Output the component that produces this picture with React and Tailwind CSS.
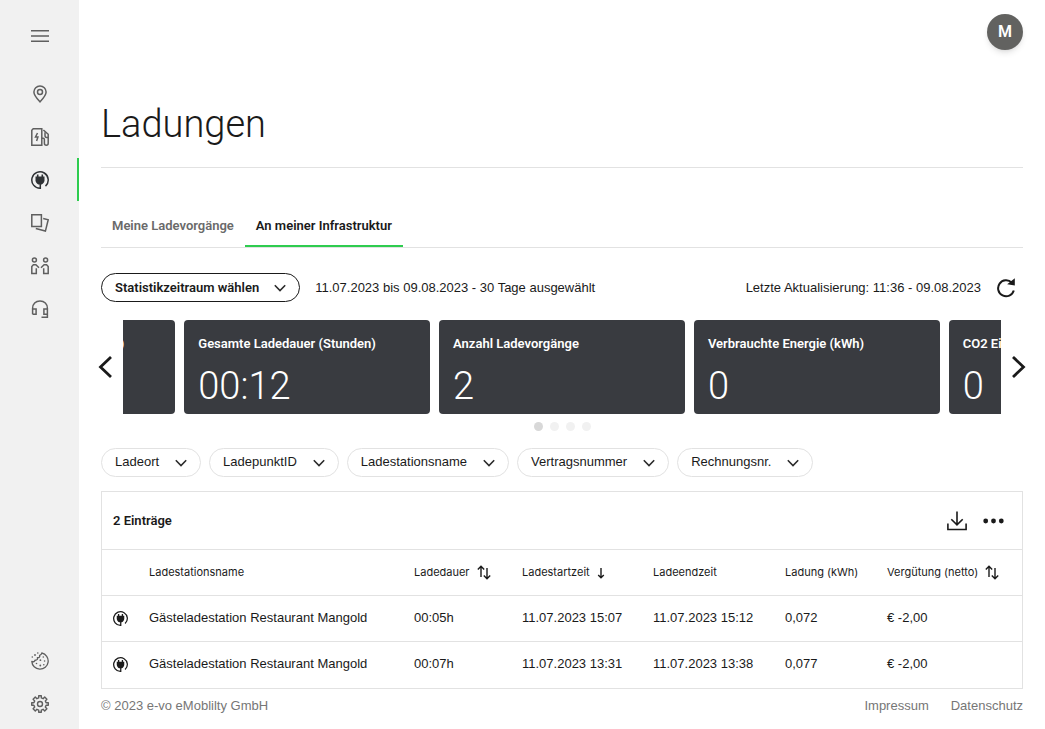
import React, { useState } from 'react';

const navItems = [
    { id: 'map', label: 'Karte', icon: PinIcon },
    { id: 'stations', label: 'Ladestationen', icon: StationIcon },
    { id: 'charges', label: 'Ladungen', icon: PlugIcon },
    { id: 'cards', label: 'Ladekarten', icon: CardsIcon },
    { id: 'users', label: 'Nutzer', icon: UsersIcon },
    { id: 'support', label: 'Support', icon: HeadsetIcon },
];

const stats = [
    { title: 'Gesamte Vergütung (Eur netto)', value: '' },
    { title: 'Gesamte Ladedauer (Stunden)', value: '00:12' },
    { title: 'Anzahl Ladevorgänge', value: '2' },
    { title: 'Verbrauchte Energie (kWh)', value: '0' },
    { title: 'CO2 Einsparung (kg)', value: '0' },
];

const filters = ['Ladeort', 'LadepunktID', 'Ladestationsname', 'Vertragsnummer', 'Rechnungsnr.'];

const rows = [
    { id: 1, name: 'Gästeladestation Restaurant Mangold', duration: '00:05h', start: '11.07.2023 15:07', end: '11.07.2023 15:12', energy: '0,072', fee: '€ -2,00' },
    { id: 2, name: 'Gästeladestation Restaurant Mangold', duration: '00:07h', start: '11.07.2023 13:31', end: '11.07.2023 13:38', energy: '0,077', fee: '€ -2,00' },
];

function PinIcon() {
    return (
        <svg width="18" height="18" viewBox="0 0 18 18" fill="none" stroke="currentColor" strokeWidth="1.5">
            <path d="M9 16.9C6 13.6 2.900 10.400 2.900 7a6.100 6.100 0 0 1 12.200 0c0 3.400-3.100 6.600-6.100 9.900z" strokeLinejoin="round" />
            <circle cx="9" cy="7" r="2.500" />
        </svg>
    );
}

function StationIcon() {
    return (
        <svg width="18" height="18" viewBox="0 0 18 18" fill="none" stroke="currentColor" strokeWidth="1.5">
            <path d="M.8 17.200V2.200L2.200.8h8.600v16.400z" />
            <path d="M6.500 5 4.500 9h2.400l-1.300 4" />
            <path d="M10.800 10.300h1.300c.9 0 1.300.5 1.300 1.300v3.700c0 2.600 3.800 2.600 3.800 0V6.300L12.400 2" />
            <path d="M17.200 9.500h-1.500c-.9 0-1.700-.9-1.700-2V4.200" />
        </svg>
    );
}

function PlugIcon({ size = 18 }) {
    return (
        <svg width={size} height={size} viewBox="0 0 18 18" fill="none" stroke="currentColor">
            <path d="M9.300 12.500v4.700A8.200 8.200 0 1 1 14.500 15.100" strokeWidth="1.500" />
            <path d="M4.500 5.600h9v3.600c0 1.900-1.200 3.400-2.900 4.200H7.400C5.700 12.600 4.500 11.100 4.500 9.200z" fill="currentColor" stroke="none" />
            <path d="M6.700 6V3.600M11.300 6V3.600" strokeWidth="1.600" />
        </svg>
    );
}

function CardsIcon() {
    return (
        <svg width="18" height="18" viewBox="0 0 18 18" fill="none" stroke="currentColor" strokeWidth="1.5">
            <path d="M.8.8h9.600v11.700H.8z" />
            <path d="M12.200 4.600l5 1.200-2.800 11.300-9.600-2.500" />
        </svg>
    );
}

function UsersIcon() {
    return (
        <svg width="18" height="18" viewBox="0 0 18 18" fill="none" stroke="currentColor" strokeWidth="1.500">
            <circle cx="3.400" cy="3" r="2" />
            <circle cx="14.600" cy="3" r="2" />
            <path d="M8 10.800 4.900 7.700H2.400L.8 9.500v7h4.500v-5.300" />
            <path d="M10 10.800l3.100-3.100h2.500l1.600 1.800v7h-4.500v-5.300" />
        </svg>
    );
}

function HeadsetIcon() {
    return (
        <svg width="18" height="18" viewBox="0 0 18 18" fill="none" stroke="currentColor" strokeWidth="1.500">
            <path d="M1.600 14.300V8.200C1.600 4 4.600 1 9 1s7.400 3 7.400 7.200v9h-5.900" />
            <path d="M1.600 8.900h3.500v5.400H1.600M16.400 8.900h-3.500v5.400h3.500" />
        </svg>
    );
}

function CookieIcon() {
    return (
        <svg width="18" height="18" viewBox="0 0 18 18" fill="none" stroke="currentColor" strokeWidth="1.300">
            <path d="M10.800 1A8.200 8.200 0 1 1 .8 9.400c1.700.8 3 .2 3.200-1.200 1.900.2 2.800-.9 2.400-2.500C8.500 5.800 9 4.600 8.600 3.300 9.900 3 10.700 2.200 10.800 1z" strokeLinejoin="round" />
            <g fill="currentColor" stroke="none">
                <circle cx="6.800" cy="1" r=".8" />
                <circle cx="1.300" cy="5" r=".8" />
                <circle cx="4" cy="3" r=".9" />
                <circle cx="12.300" cy="5" r=".8" />
                <circle cx="9.400" cy="8.200" r=".9" />
                <circle cx="13.600" cy="9" r=".8" />
                <circle cx="5.500" cy="11.500" r=".8" />
                <circle cx="9.300" cy="13.500" r=".9" />
                <circle cx="12.800" cy="12.800" r=".8" />
            </g>
        </svg>
    );
}

function GearIcon() {
    return (
        <svg width="18" height="18" viewBox="0 0 18 18" fill="none" stroke="currentColor" strokeWidth="1.400" strokeLinejoin="round">
            <path d="M7.700.7h2.600v2.200l1.800.8 1.600-1.600 2.200 2.200-1.600 1.600.8 1.800h2.200v2.600h-2.200l-.8 1.800 1.600 1.600-2.200 2.200-1.600-1.600-1.800.8v2.200H7.700v-2.200l-1.800-.8-1.600 1.600-2.200-2.200 1.600-1.600-.8-1.800H.7V7.700h2.200l.8-1.800-1.600-1.600 2.200-2.200 1.600 1.600 1.800-.8z" />
            <circle cx="9" cy="9" r="2.500" />
        </svg>
    );
}

function Chevron() {
    return (
        <svg width="12" height="8" viewBox="0 0 12 8" fill="none" stroke="currentColor" strokeWidth="1.600" className="text-[#2b2b2b]">
            <path d="M.8 1.300l5.200 5.200 5.200-5.200" />
        </svg>
    );
}

function SortIcon() {
    return (
        <svg width="14" height="15" viewBox="0 0 14 15" fill="none" stroke="currentColor" strokeWidth="1.400">
            <path d="M4 12V1.500M.8 4.600 4 1.300l3.200 3.300M10 3v10.500M6.800 10.400 10 13.700l3.200-3.300" />
        </svg>
    );
}

function ArrowDownIcon() {
    return (
        <svg width="8" height="12" viewBox="0 0 8 12" fill="none" stroke="currentColor" strokeWidth="1.400">
            <path d="M4 1v9.500M1.200 7.900 4 10.700l2.800-2.800" />
        </svg>
    );
}

function Sidebar({ active, onSelect }) {
    return (
        <aside className="flex w-[79px] shrink-0 flex-col items-center bg-[#f1f1f1] pt-[14px] pb-1 text-[#5f5f5f]">
            <button aria-label="Menü" className="flex h-[44px] w-full items-center justify-center">
                <svg width="18" height="12" viewBox="0 0 18 12" stroke="currentColor" strokeWidth="1.500">
                    <path d="M0 .8h18M0 6h18M0 11.200h18" />
                </svg>
            </button>
            <nav className="mt-[14px] flex w-full flex-col">
                {navItems.map(({ id, label, icon: Icon }) => (
                    <button
                        key={id}
                        aria-label={label}
                        onClick={() => onSelect(id)}
                        className={`flex h-[43px] w-full items-center justify-center border-r-2 pl-[2px] ${
                            active === id ? 'border-[#2ecc4f] text-[#2f3235]' : 'border-transparent'
                        }`}
                    >
                        <Icon />
                    </button>
                ))}
            </nav>
            <div className="mt-auto flex w-full flex-col">
                <button aria-label="Cookies" className="flex h-[43px] w-full items-center justify-center"><CookieIcon /></button>
                <button aria-label="Einstellungen" className="flex h-[43px] w-full items-center justify-center"><GearIcon /></button>
            </div>
        </aside>
    );
}

function StatsCarousel() {
    return (
        <section>
            <div className="-mx-1 flex items-center justify-between">
                <button aria-label="Zurück" className="flex w-[26px] shrink-0 justify-start">
                    <svg width="16" height="24" viewBox="0 0 16 24" fill="none" stroke="#1a1a1a" strokeWidth="2.800">
                        <path d="M14 2 3.500 12 14 22" />
                    </svg>
                </button>
                <div className="flex min-w-0 flex-1 justify-center gap-[9px] overflow-hidden">
                    {stats.map(stat => (
                        <article key={stat.title} className="h-[94px] w-[28%] shrink-0 rounded-[4px] bg-[#393b40] px-[14px] pt-[15px] text-white">
                            <h2 className="font-['Roboto',sans-serif] leading-[18px] font-semibold whitespace-nowrap">{stat.title}</h2>
                            <p className="mt-[9px] font-['Roboto',sans-serif] text-[38px] leading-[48px] font-light">{stat.value}</p>
                        </article>
                    ))}
                </div>
                <button aria-label="Weiter" className="flex w-[26px] shrink-0 justify-end">
                    <svg width="16" height="24" viewBox="0 0 16 24" fill="none" stroke="#1a1a1a" strokeWidth="2.800">
                        <path d="M2 2l10.500 10L2 22" />
                    </svg>
                </button>
            </div>
            <div className="mt-2 flex justify-center gap-[7px]">
                <span className="size-[9px] rounded-full bg-[#d8d8d8]"></span>
                <span className="size-[9px] rounded-full bg-[#f1f1f1]"></span>
                <span className="size-[9px] rounded-full bg-[#f1f1f1]"></span>
                <span className="size-[9px] rounded-full bg-[#f1f1f1]"></span>
            </div>
        </section>
    );
}

function ChargesTable() {
    return (
        <section className="mt-[14px] border border-[#e2e2e2]">
            <div className="flex h-[57px] items-center justify-between pr-[18px] pl-[11px]">
                <h2 className="font-['Roboto',sans-serif] font-semibold">2 Einträge</h2>
                <div className="flex items-center gap-4">
                    <button aria-label="Herunterladen">
                        <svg width="20" height="20" viewBox="0 0 20 20" fill="none" stroke="currentColor" strokeWidth="1.600">
                            <path d="M10 .5v13M4.300 8.200 10 13.800l5.700-5.600M.9 12.500v6h18.200v-6" />
                        </svg>
                    </button>
                    <button aria-label="Mehr">
                        <svg width="21" height="6" viewBox="0 0 21 6" fill="currentColor">
                            <circle cx="2.700" cy="3" r="2.400" />
                            <circle cx="10.500" cy="3" r="2.400" />
                            <circle cx="18.300" cy="3" r="2.400" />
                        </svg>
                    </button>
                </div>
            </div>
            <table className="w-full table-fixed border-collapse text-left">
                <thead>
                    <tr className="h-[46px] border-t border-[#e2e2e2] font-['Inter',sans-serif] text-[11px]">
                        <th className="w-[47px]"></th>
                        <th className="font-normal">Ladestationsname</th>
                        <th className="w-[108px] font-normal">
                            <button className="flex items-center gap-[7px]">Ladedauer <SortIcon /></button>
                        </th>
                        <th className="w-[131px] font-normal">
                            <button className="flex items-center gap-[7px]">Ladestartzeit <ArrowDownIcon /></button>
                        </th>
                        <th className="w-[132px] font-normal">Ladeendzeit</th>
                        <th className="w-[102px] font-normal">Ladung (kWh)</th>
                        <th className="w-[135px] font-normal">
                            <button className="flex items-center gap-[7px]">Vergütung (netto) <SortIcon /></button>
                        </th>
                    </tr>
                </thead>
                <tbody>
                    {rows.map(row => (
                        <tr key={row.id} className="h-[46px] border-t border-[#e2e2e2]">
                            <td className="pl-[11px]"><PlugIcon size={15} /></td>
                            <td className="pb-[2px]">{row.name}</td>
                            <td className="pb-[2px]">{row.duration}</td>
                            <td className="pb-[2px]">{row.start}</td>
                            <td className="pb-[2px]">{row.end}</td>
                            <td className="pb-[2px]">{row.energy}</td>
                            <td className="pb-[2px]">{row.fee}</td>
                        </tr>
                    ))}
                </tbody>
            </table>
        </section>
    );
}

function App() {
    const [active, setActive] = useState('charges');

    return (
        <div className="flex min-h-screen bg-white font-['Liberation_Sans',Arial,sans-serif] text-[13px] text-[#1a1a1a]">
            <Sidebar active={active} onSelect={setActive} />
            <main className="flex min-w-0 flex-1 flex-col px-[22px]">
                <header className="flex justify-end pt-[14px]">
                    <button className="size-9 rounded-full bg-[#626260] font-['Roboto',sans-serif] text-base font-semibold text-white shadow-md">M</button>
                </header>

                <h1 className="mt-[50px] border-b border-[#e2e2e2] pb-[18px] font-['Roboto',sans-serif] text-[38px] leading-[49px] font-light">Ladungen</h1>

                {/* Tabs */}
                <div role="tablist" className="mt-[36px] flex border-b border-[#e2e2e2] font-['Roboto',sans-serif] font-semibold">
                    <button role="tab" aria-selected="false" className="h-[43px] border-b-2 border-transparent px-[11px] pt-[2px] text-[#6a6a6a]">Meine Ladevorgänge</button>
                    <button role="tab" aria-selected="true" className="h-[43px] border-b-2 border-[#2ecc4f] px-[11px] pt-[2px]">An meiner Infrastruktur</button>
                </div>

                {/* Time range */}
                <div className="mt-[25px] mb-[18px] flex items-center justify-between">
                    <div className="flex items-center gap-[15px]">
                        <button className="flex h-[29px] items-center gap-[15px] rounded-full border border-[#1a1a1a] px-[13px] font-['Roboto',sans-serif] font-semibold">
                            Statistikzeitraum wählen
                            <Chevron />
                        </button>
                        <span>11.07.2023 bis 09.08.2023 - 30 Tage ausgewählt</span>
                    </div>
                    <div className="flex items-center gap-4 pr-[7px]">
                        <span>Letzte Aktualisierung: 11:36 - 09.08.2023</span>
                        <button aria-label="Aktualisieren">
                            <svg width="19" height="20" viewBox="0 0 19 20" fill="none" stroke="currentColor" strokeWidth="2">
                                <path d="M14.800 4.600A8 8 0 1 0 16.800 12.500" />
                                <path d="M17.800 .2v7.200l-7.600-1.200z" fill="currentColor" stroke="none" />
                            </svg>
                        </button>
                    </div>
                </div>

                <StatsCarousel />

                {/* Filters */}
                <div className="mt-[17px] flex flex-wrap gap-2">
                    {filters.map(filter => (
                        <button key={filter} className="flex h-[29px] items-center gap-4 rounded-full border border-[#e2e2e2] px-[13px]">
                            <span className="pb-[2px]">{filter}</span>
                            <Chevron />
                        </button>
                    ))}
                </div>

                <ChargesTable />

                <footer className="flex justify-between pt-[7px] pb-[14px] leading-[20px] text-[#767676]">
                    <span>© 2023 e-vo eMoblilty GmbH</span>
                    <div className="flex gap-[22px]">
                        <a href="#impressum">Impressum</a>
                        <a href="#datenschutz">Datenschutz</a>
                    </div>
                </footer>
            </main>
        </div>
    );
}

export default App;
